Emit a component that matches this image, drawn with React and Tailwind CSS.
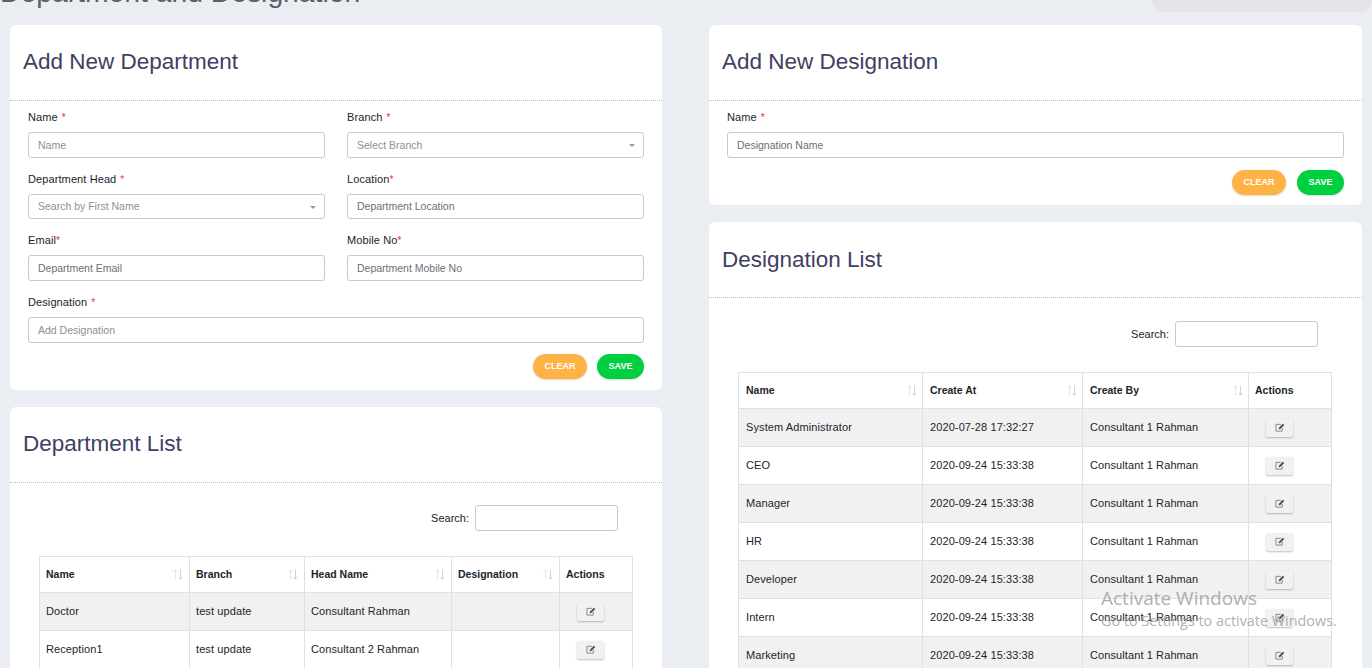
const deptRows = [
  ['Doctor', 'test update', 'Consultant Rahman', ''],
  ['Reception1', 'test update', 'Consultant 2 Rahman', ''],
];

const desigRows = [
  ['System Administrator', '2020-07-28 17:32:27'],
  ['CEO', '2020-09-24 15:33:38'],
  ['Manager', '2020-09-24 15:33:38'],
  ['HR', '2020-09-24 15:33:38'],
  ['Developer', '2020-09-24 15:33:38'],
  ['Intern', '2020-09-24 15:33:38'],
  ['Marketing', '2020-09-24 15:33:38'],
];

const SortIcon = () => (
  <svg width="10" height="11" viewBox="0 0 10 11" fill="none" className="shrink-0">
    <path d="M2.5 10.5V1M.7 3l1.8-2.2L4.3 3" stroke="#e4e6ea" strokeWidth="1" />
    <path d="M7.5 .5V10M5.7 8l1.8 2.2L9.3 8" stroke="#cfd2d6" strokeWidth="1" />
  </svg>
);

const EditIcon = () => (
  <svg width="10" height="9" viewBox="0 0 11 10" fill="none">
    <path d="M6.5 1.5H1V9h7V5.5" stroke="#7d7f84" strokeWidth="1" />
    <path d="M4 7l.4-1.8L8.6.8l1.6 1.5L5.8 6.6z" fill="#45484d" />
  </svg>
);

const Field = ({ label, gap, placeholder, dark, select, short, className = '' }) => (
  <div className={`flex flex-col ${className}`}>
    <label className="h-[14px] text-[11px] leading-[14px] tracking-[0.1px] text-[#212529]">
      {label}
      <span className={`text-[10px] text-[#e3342f] ${gap ? 'ml-[4px]' : ''}`}>*</span>
    </label>
    <div className="relative mt-[8px]">
      <input
        readOnly
        placeholder={placeholder}
        className={`block w-full rounded-[3px] border border-[#c8c9cb] bg-white px-[9px] text-[10.5px] outline-none ${
          short ? 'h-[25px] pb-[1px]' : 'h-[26px]'
        } ${dark ? 'placeholder:text-[#6b6f75]' : 'placeholder:text-[#8d9096]'}`}
      />
      {select && (
        <span className="absolute right-[9px] top-[12px] h-0 w-0 border-x-[3px] border-t-[3px] border-x-transparent border-t-[#999]" />
      )}
    </div>
  </div>
);

const Buttons = ({ className }) => (
  <div className={`flex justify-end ${className}`}>
    <button className="h-[25px] w-[54px] rounded-full bg-[#ffb347] text-[9px] font-bold text-white shadow-[0_1px_2px_rgba(0,0,0,0.15)]">
      CLEAR
    </button>
    <button className="h-[25px] w-[47px] rounded-full bg-[#00d03f] text-[9px] font-bold text-white shadow-[0_1px_2px_rgba(0,0,0,0.15)]">
      SAVE
    </button>
  </div>
);

const CardHeader = ({ title, className = 'pb-[2px]' }) => (
  <div className={`flex h-[76px] items-center border-b border-dotted border-[#bdbdbd] pl-[13px] ${className}`}>
    <h2 className="text-[22.5px] leading-[28px] text-[#3f4064]">{title}</h2>
  </div>
);

const SearchBox = () => (
  <div className="flex items-center justify-end gap-[6px] pr-[44px] text-[11px] text-[#212529]">
    <span>Search:</span>
    <input readOnly className="h-[26px] w-[143px] rounded-[3px] border border-[#c8c9cb] bg-white outline-none" />
  </div>
);

const EditButton = () => (
  <button className="ml-[11px] flex h-[18px] w-[27px] items-center justify-center rounded-[2px] bg-[#f1f1f1] shadow-[0_1px_2px_rgba(0,0,0,0.25)]">
    <EditIcon />
  </button>
);

const DataTable = ({ headers, widths, rows, cellPad = 'px-[6px]', headPad = 'pl-[6px] pr-[6px]' }) => (
  <table className="table-fixed border-collapse text-[11px] tracking-[0.1px] text-[#212529]" style={{ width: 593 }}>
    <colgroup>
      {widths.map((w, i) => (
        <col key={i} style={{ width: w }} />
      ))}
    </colgroup>
    <thead>
      <tr className="h-[36px]">
        {headers.map((h) => (
          <th key={h} className={`border border-[#dee2e6] text-left text-[10.5px] font-bold tracking-normal ${headPad}`}>
            <div className="flex items-center justify-between">
              <span>{h}</span>
              <SortIcon />
            </div>
          </th>
        ))}
        <th className="border border-[#dee2e6] px-[6px] text-left text-[10.5px] font-bold tracking-normal">Actions</th>
      </tr>
    </thead>
    <tbody>
      {rows.map((row, i) => (
        <tr key={i} className={`h-[38px] ${i % 2 === 0 ? 'bg-[#f1f1f1]' : 'bg-white'}`}>
          {row.map((cell, j) => (
            <td key={j} className={`border border-[#dee2e6] ${cellPad}`}>
              {cell}
            </td>
          ))}
          <td className="border border-[#dee2e6] px-[6px]">
            <EditButton />
          </td>
        </tr>
      ))}
    </tbody>
  </table>
);

export default function App() {
  return (
    <div className="relative h-[668px] w-[1372px] overflow-hidden bg-[#eaedf2] font-['Liberation_Sans',Arial,sans-serif]">
      {/* Top strip, page title is cut off by the scroll */}
      <div className="flex h-[25px] items-start justify-between overflow-hidden">
        <h1 className="-mt-[24px] text-[28.3px] leading-[32px] text-[#5b5e6b]">Department and Designation</h1>
        <div className="h-[12px] w-[220px] rounded-b-[14px] bg-[#e4e3e8]" />
      </div>

      <div className="flex gap-[47px] pl-[10px]">
        {/* Department column */}
        <div className="flex w-[652px] flex-col gap-[17px]">
          <section className="rounded-[6px] bg-white">
            <CardHeader title="Add New Department" />
            <div className="px-[18px] pb-[11px] pt-[9px]">
              <div className="grid grid-cols-[297px_297px] gap-x-[22px] gap-y-[14px]">
                <Field label="Name" gap placeholder="Name" />
                <Field label="Branch" gap placeholder="Select Branch" select />
                <Field label="Department Head" gap placeholder="Search by First Name" select short />
                <Field label="Location" placeholder="Department Location" dark short />
                <Field label="Email" placeholder="Department Email" dark />
                <Field label="Mobile No" placeholder="Department Mobile No" dark />
                <Field label="Designation" gap placeholder="Add Designation" className="col-span-2" />
              </div>
              <Buttons className="mt-[11px] gap-[10px]" />
            </div>
          </section>

          <section className="h-[400px] rounded-[6px] bg-white">
            <CardHeader title="Department List" />
            <div className="pt-[22px]">
              <SearchBox />
              <div className="pl-[29px] pt-[25px]">
                <DataTable
                  headers={['Name', 'Branch', 'Head Name', 'Designation']}
                  widths={[150, 115, 147, 108, 73]}
                  rows={deptRows}
                />
              </div>
            </div>
          </section>
        </div>

        {/* Designation column */}
        <div className="flex w-[653px] flex-col gap-[17px]">
          <section className="rounded-[6px] bg-white">
            <CardHeader title="Add New Designation" />
            <div className="px-[18px] pb-[10px] pt-[9px]">
              <Field label="Name" gap placeholder="Designation Name" dark />
              <Buttons className="mt-[12px] gap-[11px]" />
            </div>
          </section>

          <section className="h-[600px] rounded-[6px] bg-white">
            <CardHeader title="Designation List" className="pb-0" />
            <div className="pt-[23px]">
              <SearchBox />
              <div className="pl-[29px] pt-[25px]">
                <DataTable
                  headers={['Name', 'Create At', 'Create By']}
                  widths={[184, 160, 166, 83]}
                  rows={desigRows.map((r) => [...r, 'Consultant 1 Rahman'])}
                  cellPad="px-[7px]"
                  headPad="pl-[7px] pr-[5px]"
                />
              </div>
            </div>
          </section>
        </div>
      </div>

      {/* Activate Windows watermark */}
      <div className="pointer-events-none absolute left-[1101px] top-[586px] font-['Open_Sans',sans-serif] text-[#9a9a9a]/80">
        <div className="text-[19px] leading-[24px]">Activate Windows</div>
        <div className="text-[14.4px] leading-[22px]">Go to Settings to activate Windows.</div>
      </div>
    </div>
  );
}
